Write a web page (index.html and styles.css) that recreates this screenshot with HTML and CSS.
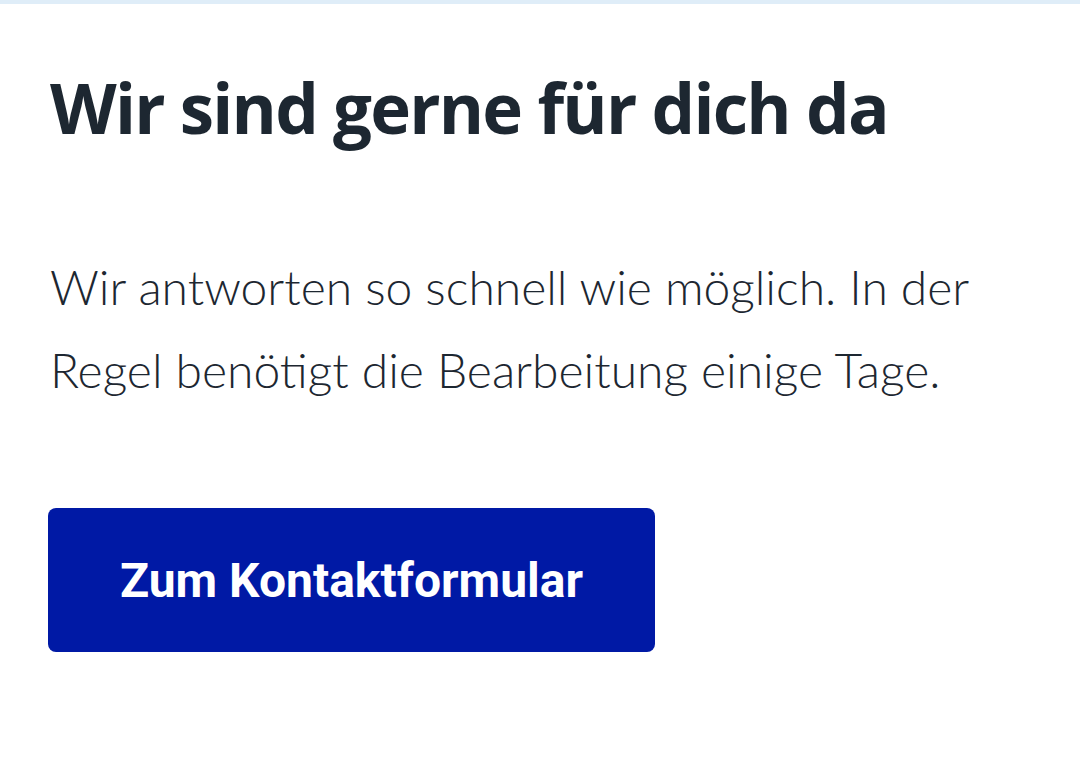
FILE: index.html
```html
<!DOCTYPE html>
<html lang="de">
<head>
  <meta charset="UTF-8" />
  <meta name="viewport" content="width=device-width, initial-scale=1" />
  <title>Kontakt</title>
  <link rel="stylesheet" href="styles.css">
</head>
<body>

<div class="contact-card">
  <h1>Wir sind gerne für dich da</h1>
  <p class="intro">Wir antworten so schnell wie möglich. In der Regel benötigt die Bearbeitung einige Tage.</p>
  <a class="contact-btn" href="#">Zum Kontaktformular</a>
</div>

</body>
</html>
```

FILE: styles.css
```css
body {
  margin: 0;
  padding: 0;
  background: #fff;
  color: #1d2731;
  font-family: 'Open Sans', 'Noto Sans', sans-serif;
}

.contact-card {
  border-top: 4px solid #dfedf8;
  padding: 55px 48px 0 50px;
}

h1 {
  margin: 0;
  font-size: 69px;
  font-weight: 700;
  line-height: 96px;
  letter-spacing: -1.8px;
}

.intro {
  margin: 90px 0 0;
  max-width: 960px;
  font-family: 'Lato', sans-serif;
  font-weight: 300;
  font-size: 48px;
  line-height: 83px;
}

.contact-btn {
  display: flex;
  align-items: center;
  justify-content: center;
  box-sizing: border-box;
  width: 607px;
  height: 144px;
  margin: 97px 0 0 -2px;
  background: #0019a5;
  color: #fff;
  border-radius: 8px;
  font-family: Roboto, sans-serif;
  font-weight: 700;
  font-size: 48px;
  text-decoration: none;
}
```
